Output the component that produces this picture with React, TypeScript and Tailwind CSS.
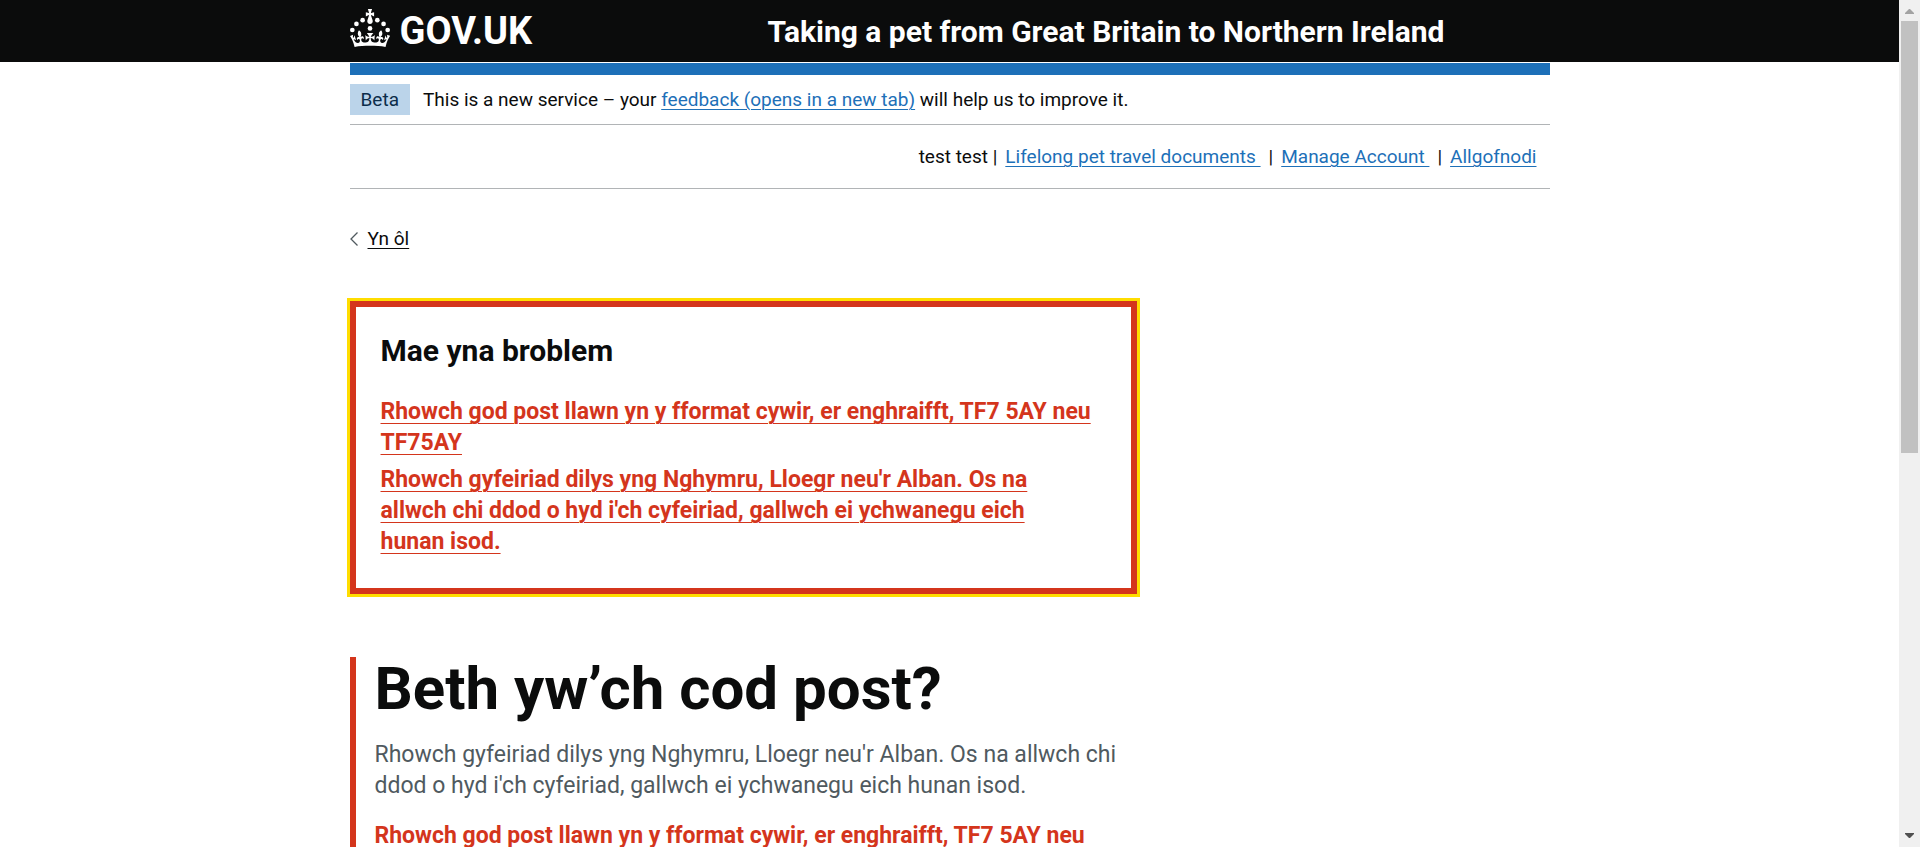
import type { ReactNode } from 'react';

const POSTCODE_ERROR = 'Rhowch god post llawn yn y fformat cywir, er enghraifft, TF7 5AY neu TF75AY';
const ADDRESS_HINT =
  "Rhowch gyfeiriad dilys yng Nghymru, Lloegr neu'r Alban. Os na allwch chi ddod o hyd i'ch cyfeiriad, gallwch ei ychwanegu eich hunan\u00a0isod.";

function Container({ children }: { children: ReactNode }) {
  return <div className="mx-auto w-full max-w-[1200px]">{children}</div>;
}

function Crown() {
  return (
    <svg className="h-[38px] w-10 shrink-0" viewBox="0 0 63.4 60" fill="currentColor" aria-hidden="true">
      <circle cx="20" cy="17.6" r="3.7" />
      <circle cx="10.2" cy="23.5" r="3.7" />
      <circle cx="3.7" cy="33.2" r="3.7" />
      <circle cx="31.7" cy="30.6" r="3.7" />
      <circle cx="43.3" cy="17.6" r="3.7" />
      <circle cx="53.2" cy="23.5" r="3.7" />
      <circle cx="59.7" cy="33.2" r="3.7" />
      <path d="M33.1,9.8c.2-.1.3-.3.5-.5l4.6,2.4v-6.8l-4.6,1.5c-.1-.2-.3-.3-.5-.5l1.9-5.9h-6.7l1.9,5.9c-.2.1-.3.3-.5.5l-4.6-1.5v6.8l4.6-2.4c.1.2.3.3.5.5l-2.6,8c-.9,2.8,1.2,5.7,4.1,5.7h0c3,0,5.1-2.9,4.1-5.7l-2.6-8ZM37,37.9s-3.4,3.8-4.1,6.1c2.2,0,4.2-.5,6.4-2.8l-.7,8.5c-2-2.8-4.4-4.1-5.7-3.8.1,3.1.5,6.7,5.8,7.2,3.7.3,6.7-1.5,7-3.8.4-2.6-2-4.3-3.7-1.6-1.4-4.5,2.4-6.1,4.9-3.2-1.9-4.5-1.8-7.7,2.4-10.9,3,4,2.6,7.3-1.2,11.1,2.4-1.3,6.2,0,4,4.6-1.2-2.8-3.7-2.2-4.2.2-.3,1.7.7,3.7,3,4.2,1.9.3,4.7-.9,7-5.9-1.3,0-2.4.7-3.9,1.7l2.4-8c.6,2.3,1.4,3.7,2.2,4.5.6-1.6.5-2.8,0-5.3l5,1.8c-2.6,3.6-5.2,8.7-7.3,17.5-7.4-1.1-15.7-1.7-24.5-1.7h0c-8.8,0-17.1.6-24.5,1.7-2.1-8.9-4.7-13.9-7.3-17.5l5-1.8c-.5,2.5-.6,3.7,0,5.3.8-.8,1.6-2.3,2.2-4.5l2.4,8c-1.5-1-2.6-1.7-3.9-1.7,2.3,5,5.2,6.2,7,5.9,2.3-.4,3.3-2.4,3-4.2-.5-2.4-3-3.1-4.2-.2-2.2-4.6,1.6-6,4-4.6-3.7-3.7-4.2-7.1-1.2-11.1,4.2,3.2,4.3,6.4,2.4,10.9,2.5-2.8,6.3-1.3,4.9,3.2-1.8-2.7-4.1-1-3.7,1.6.3,2.3,3.3,4.1,7,3.8,5.4-.5,5.7-4.2,5.8-7.2-1.3-.2-3.7,1-5.7,3.8l-.7-8.5c2.2,2.3,4.2,2.7,6.4,2.8-.7-2.3-4.1-6.1-4.1-6.1h10.6,0Z" />
    </svg>
  );
}

function Header() {
  return (
    <header className="bg-[#0b0c0c] text-white">
      <Container>
        <div className="flex h-[62px] items-center">
          <div className="w-[418px] shrink-0 pb-[6px]">
            <a href="#" className="flex items-center gap-[10px]">
              <Crown />
              <span className="pt-[6px] text-[38px] leading-[38px] font-bold">GOV.UK</span>
            </a>
          </div>
          <a href="#" className="pt-px text-[30px] leading-[38px] font-bold">
            Taking a pet from Great Britain to Northern Ireland
          </a>
        </div>
      </Container>
    </header>
  );
}

function BlueLink({ children }: { children: ReactNode }) {
  return (
    <a href="#" className="text-[#1d70b8] underline decoration-1 underline-offset-3">
      {children}
    </a>
  );
}

function PhaseBanner() {
  return (
    <div className="flex items-center gap-[13px] border-b border-[#b1b4b6] py-[9px] text-[19px] leading-[31px]">
      <strong className="bg-[#bbd4ea] px-[11px] font-normal text-[#0c2d4a]">Beta</strong>
      <p>
        This is a new service – your <BlueLink>feedback (opens in a new tab)</BlueLink> will help us to improve it.
      </p>
    </div>
  );
}

function AccountNav() {
  return (
    <nav className="flex justify-end gap-2 border-b border-[#b1b4b6] py-[19px] pr-[13px] text-[19px] leading-[25px]">
      <span>test test |</span>
      <BlueLink>Lifelong pet travel documents&nbsp;</BlueLink>
      <span>|</span>
      <BlueLink>Manage Account&nbsp;</BlueLink>
      <span>|</span>
      <BlueLink>Allgofnodi</BlueLink>
    </nav>
  );
}

function ErrorSummary() {
  return (
    <section
      role="alert"
      aria-labelledby="summary-title"
      className="mt-[50px] max-w-[787px] border-[6px] border-[#d4351c] p-[25px] outline-3 outline-[#ffdd00]"
    >
      <h2 id="summary-title" className="text-[30px] leading-[38px] font-bold">
        Mae yna broblem
      </h2>
      <ul className="mt-[26px] pr-[10px] text-[23px] leading-[31px] font-bold text-[#d4351c]">
        {[POSTCODE_ERROR, ADDRESS_HINT].map((message) => (
          <li key={message} className="mb-[6px]">
            <a href="#postcode" className="underline decoration-1 underline-offset-4">
              {message}
            </a>
          </li>
        ))}
      </ul>
    </section>
  );
}

function PostcodeQuestion() {
  return (
    <div className="mt-[63px] max-w-[787px] border-l-[6px] border-[#d4351c] pl-[19px] text-[23px] leading-[31px]">
      <h1 className="text-[60px] leading-[63px] font-bold">
        <label htmlFor="postcode">Beth yw’ch cod post?</label>
      </h1>
      <p id="postcode-hint" className="mt-[19px] text-[#505a5f]">
        {ADDRESS_HINT}
      </p>
      <p id="postcode-error" className="mt-[19px] font-bold text-[#d4351c]">
        {POSTCODE_ERROR}
      </p>
      <input
        id="postcode"
        type="text"
        aria-describedby="postcode-hint postcode-error"
        className="mt-[19px] h-[50px] w-64 border-2 border-[#d4351c] px-2"
      />
    </div>
  );
}

function ScrollTrack() {
  return (
    <div aria-hidden="true" className="flex w-[21px] shrink-0 flex-col items-center bg-[#f0f0f0]">
      <svg className="h-[21px] w-[9px] shrink-0 fill-[#a3a3a3]" viewBox="0 0 9 21">
        <path d="M0 14V13L4 9H5L9 13V14Z" />
      </svg>
      <div className="h-[51%] w-[17px] bg-[#c1c1c1]" />
      <svg className="mt-auto h-[21px] w-[9px] shrink-0 fill-[#505050]" viewBox="0 0 9 21">
        <path d="M0 7V8L4 12H5L9 8V7Z" />
      </svg>
    </div>
  );
}

export default function App() {
  return (
    <div className="flex h-screen overflow-hidden bg-white font-['Roboto',sans-serif] text-[#0b0c0c]">
      <div className="min-w-0 flex-1 overflow-hidden">
        <Header />
        <Container>
          <div className="mt-px h-3 bg-[#1d70b8]" />
          <PhaseBanner />
          <AccountNav />
          <a href="#" className="mt-[37px] flex items-center gap-[10px] text-[19px] leading-[25px]">
            <svg className="h-[14px] w-2" viewBox="0 0 8 14" fill="none" stroke="#505a5f" strokeWidth="1.3" aria-hidden="true">
              <path d="M7.5 0.5L1 7L7.5 13.5" />
            </svg>
            <span className="underline decoration-1 underline-offset-3">Yn ôl</span>
          </a>
          <main>
            <ErrorSummary />
            <PostcodeQuestion />
          </main>
        </Container>
      </div>
      <ScrollTrack />
    </div>
  );
}
